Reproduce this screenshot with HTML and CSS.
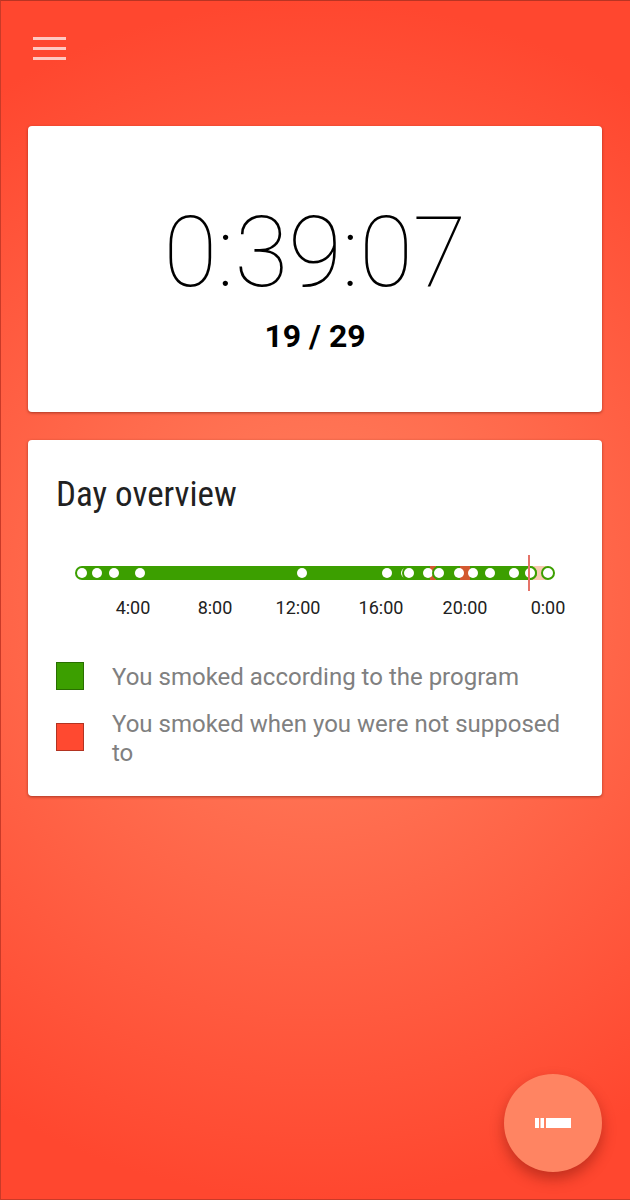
FILE: index.html
```html
<!DOCTYPE html>
<html lang="en">
  <head>
    <meta charset="UTF-8" />
    <meta name="viewport" content="width=device-width, initial-scale=1.0" />
    <title>Day overview</title>
    <link rel="stylesheet" href="styles.css">
  </head>
  <body>
    <header class="toolbar">
      <button class="menu" type="button" aria-label="Menu">
        <span class="menu-line"></span>
        <span class="menu-line"></span>
        <span class="menu-line"></span>
      </button>
    </header>

    <main class="content">
      <section class="card timer">
        <div class="time">0:39:07</div>
        <div class="count">19 / 29</div>
      </section>

      <section class="card overview">
        <h1 class="title">Day overview</h1>

        <svg class="timeline" viewBox="0 0 518 70" role="img" aria-label="Timeline">
          <rect class="pending" x="474" y="13" width="18" height="14" />
          <rect class="ok" x="19" y="13" width="462" height="14" rx="7" />
          <rect class="bad" x="374" y="13" width="6" height="14" />
          <rect class="bad" x="404" y="13" width="10" height="14" />

          <!-- smoked -->
          <circle class="dot" cx="26" cy="20" r="5" />
          <circle class="dot" cx="41" cy="20" r="5" />
          <circle class="dot" cx="58" cy="20" r="5" />
          <circle class="dot" cx="84" cy="20" r="5" />
          <circle class="dot" cx="246" cy="20" r="5" />
          <circle class="dot" cx="331" cy="20" r="5" />
          <circle class="dot" cx="350" cy="20" r="5" />
          <circle class="dot ring" cx="353" cy="20" r="6" />
          <circle class="dot" cx="372" cy="20" r="5" />
          <circle class="dot ring" cx="383" cy="20" r="6" />
          <circle class="dot" cx="403" cy="20" r="5" />
          <circle class="dot" cx="417" cy="20" r="5" />
          <circle class="dot" cx="434" cy="20" r="5" />
          <circle class="dot" cx="458" cy="20" r="5" />
          <circle class="dot ring" cx="474" cy="20" r="6" />
          <circle class="dot ring" cx="492" cy="20" r="6" />

          <!-- now -->
          <rect class="now" x="472" y="2" width="2" height="36" />

          <g class="hours">
            <text x="77" y="61">4:00</text>
            <text x="159" y="61">8:00</text>
            <text x="242" y="61">12:00</text>
            <text x="325" y="61">16:00</text>
            <text x="409" y="61">20:00</text>
            <text x="492" y="61">0:00</text>
          </g>
        </svg>

        <ul class="legend">
          <li class="legend-item">
            <span class="swatch green"></span>
            <span class="legend-text">You smoked according to the program</span>
          </li>
          <li class="legend-item">
            <span class="swatch red"></span>
            <span class="legend-text">You smoked when you were not supposed to</span>
          </li>
        </ul>
      </section>
    </main>

    <button class="fab" type="button" aria-label="Smoke">
      <svg width="36" height="10" viewBox="0 0 36 10" fill="#fff">
        <rect x="0" y="0" width="4" height="10" />
        <rect x="5.5" y="0" width="3.5" height="10" />
        <rect x="11" y="0" width="25" height="10" />
      </svg>
    </button>
  </body>
</html>
```
FILE: styles.css
```css
* {
  box-sizing: border-box;
}

body {
  margin: 0;
  min-height: 100vh;
  border-top: 1px solid #b93423;
  border-left: 1px solid #c93a28;
  border-bottom: 1px solid #c93a28;
  background: radial-gradient(circle at 50% 50%, #ff8462, #ff472f 600px);
  font-family: Roboto, "Liberation Sans", sans-serif;
}

button {
  border: 0;
  cursor: pointer;
}

.toolbar {
  height: 97px;
  padding: 24px 20px;
}

.menu {
  display: flex;
  flex-direction: column;
  gap: 7px;
  padding: 12px;
  background: none;
}

.menu-line {
  width: 33px;
  height: 3px;
  background: rgba(255, 255, 255, 0.7);
}

.content {
  display: flex;
  flex-direction: column;
  gap: 28px;
  padding: 28px 28px 28px 27px;
}

.card {
  padding: 28px;
  border-radius: 4px;
  background: #fff;
  box-shadow: 0 1px 3px rgba(100, 20, 10, 0.55);
}

.timer {
  padding: 77px 28px 56px;
  text-align: center;
  color: #000;
}

.time {
  font-size: 98px;
  font-weight: 100;
  line-height: 100px;
}

.count {
  margin-top: 13px;
  font-size: 32px;
  font-weight: 700;
  line-height: 40px;
}

.title {
  margin: 0;
  color: #212121;
  font-family: "Roboto Condensed", Roboto, sans-serif;
  font-size: 35px;
  font-weight: 400;
  line-height: 54px;
}

.timeline {
  display: block;
  width: 100%;
  margin-top: 31px;
}

.ok {
  fill: #3c9f00;
}

.bad {
  fill: #d3582f;
}

.pending {
  fill: #f8c9b0;
}

.dot {
  fill: #fff;
}

.ring {
  stroke: #3c9f00;
  stroke-width: 2px;
}

.now {
  fill: #e57368;
}

.hours {
  fill: #212121;
  font-size: 18px;
  text-anchor: middle;
}

.legend {
  display: flex;
  flex-direction: column;
  gap: 14px;
  margin: 36px 0 0;
  padding: 0;
  list-style: none;
  color: #808080;
  font-size: 24px;
  line-height: 29px;
}

.legend-item {
  display: flex;
  align-items: center;
  gap: 28px;
}

.legend-text {
  padding-top: 4px;
}

.swatch {
  flex: none;
  width: 28px;
  height: 28px;
  border: 1px solid rgba(0, 0, 0, 0.3);
}

.green {
  background: #3c9f00;
}

.red {
  background: #ff4930;
}

.fab {
  position: fixed;
  right: 28px;
  bottom: 28px;
  display: flex;
  align-items: center;
  justify-content: center;
  width: 98px;
  height: 98px;
  padding: 0;
  border-radius: 50%;
  background: #ff8462;
  box-shadow: 0 7px 14px rgba(120, 20, 10, 0.45);
}
```
